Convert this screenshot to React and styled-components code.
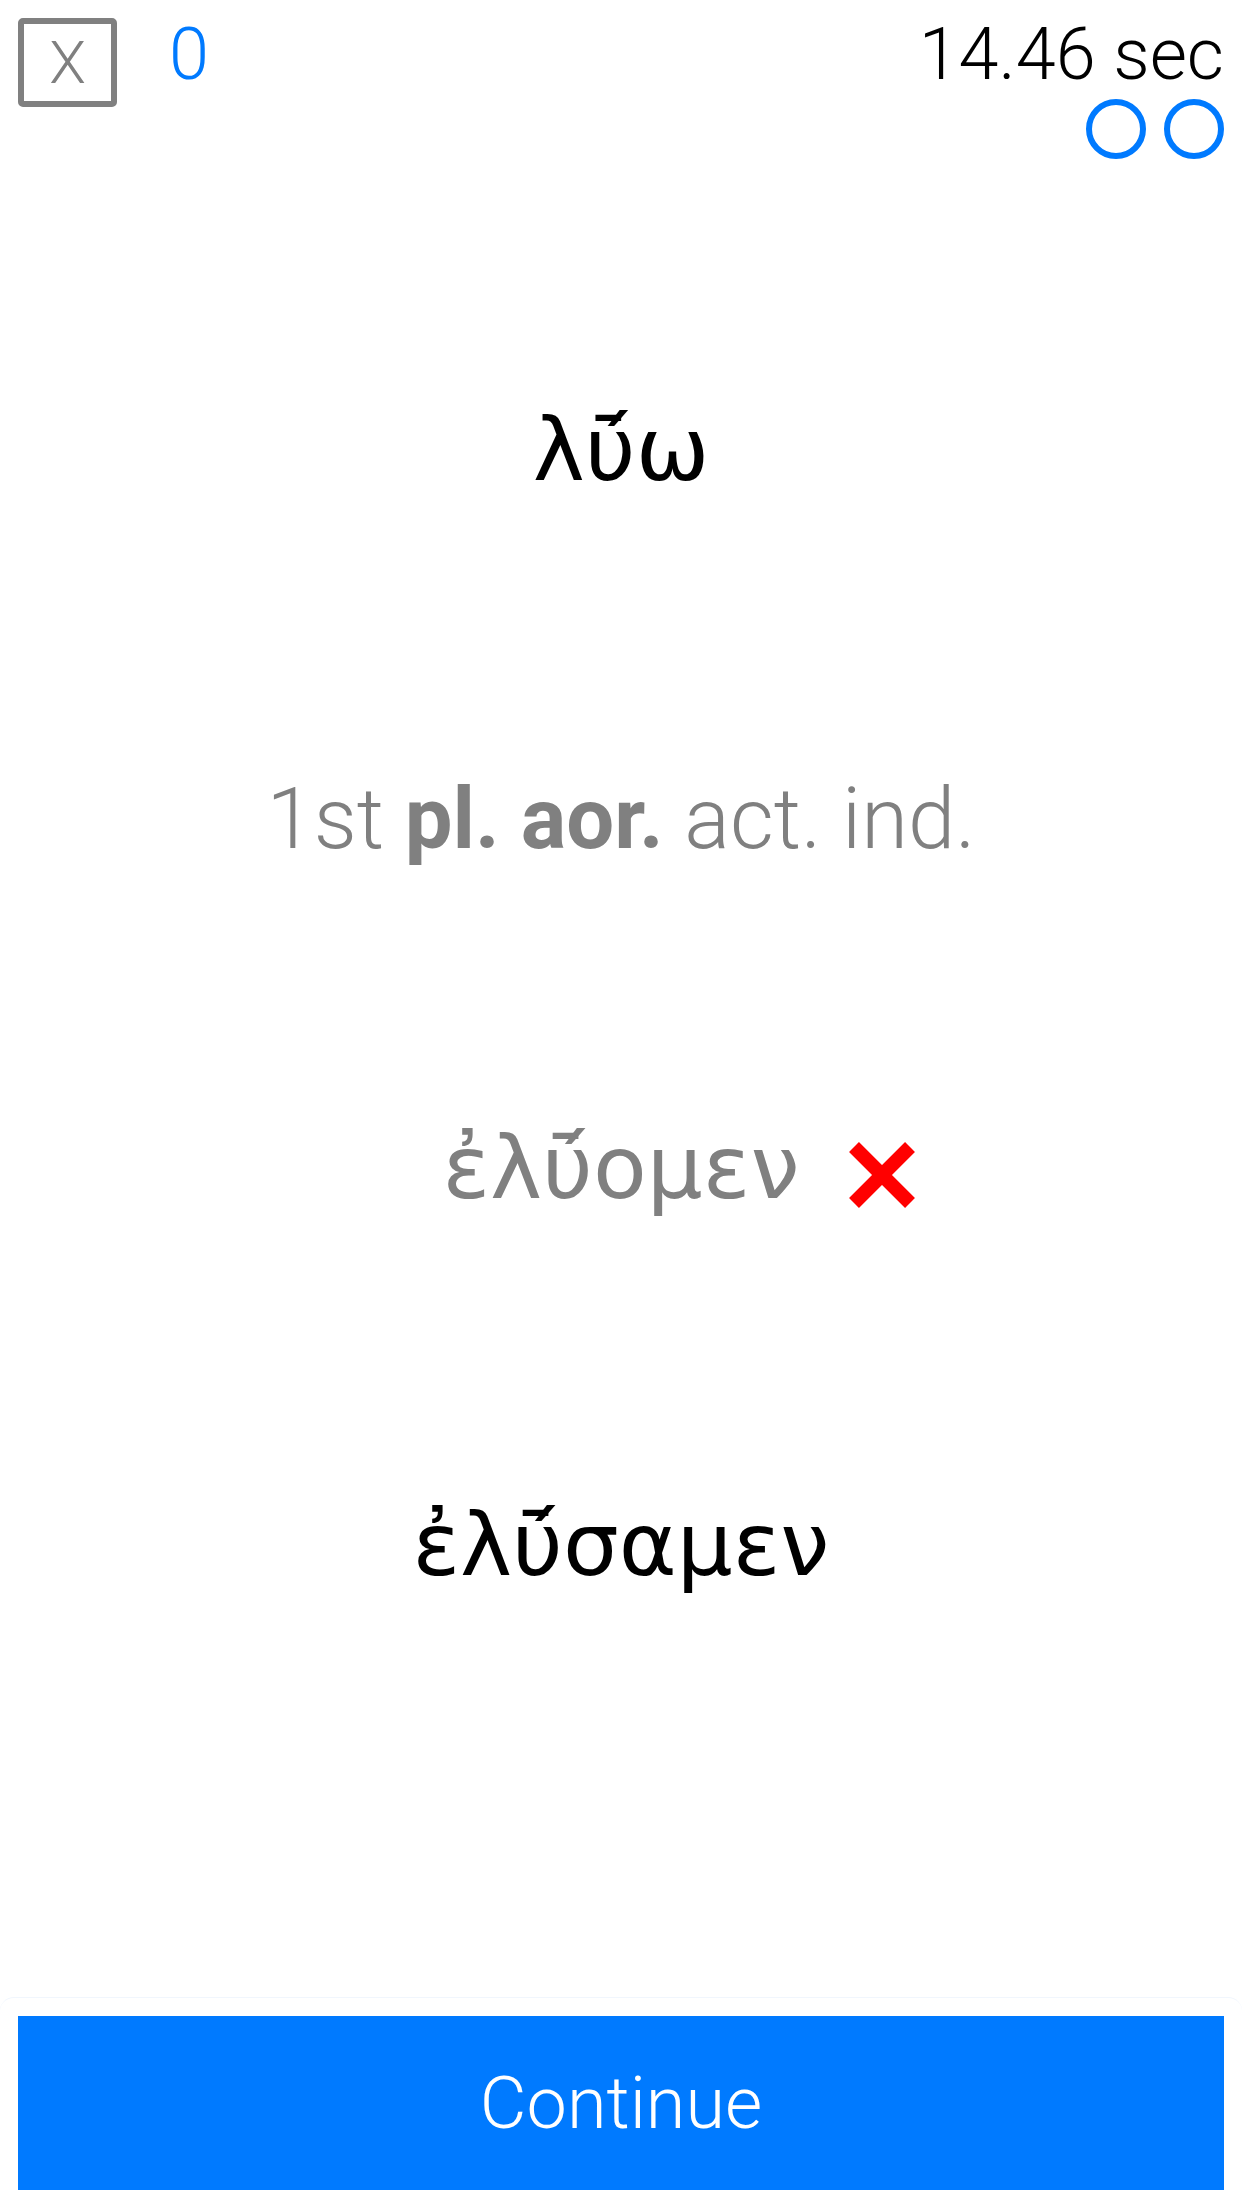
import React from 'react';
import styled, { createGlobalStyle } from 'styled-components';

const GlobalStyle = createGlobalStyle`
  html, body {
    margin: 0;
    padding: 0;
    background: #ffffff;
  }
  body {
    font-family: Roboto, "Liberation Sans", sans-serif;
  }
`;

const Page = styled.div`
  width: 1242px;
  height: 2208px;
  display: flex;
  flex-direction: column;
  background: #ffffff;
  overflow: hidden;
`;

const TopBar = styled.div`
  display: flex;
  justify-content: space-between;
  align-items: flex-start;
  padding: 18px 18px 0 18px;
`;

const Left = styled.div`
  display: flex;
  align-items: flex-start;
`;

const QuitBox = styled.div`
  width: 99px;
  height: 89px;
  box-sizing: border-box;
  border: 6px solid #808080;
  border-radius: 5px;
  display: flex;
  align-items: center;
  justify-content: center;
  color: #808080;
  font-family: Roboto, sans-serif;
  font-weight: 300;
  font-size: 60px;
  line-height: 1;
`;

const Score = styled.div`
  margin-left: 52px;
  margin-top: 1px;
  color: #007aff;
  font-weight: 300;
  font-size: 72px;
  line-height: 1;
`;

const Right = styled.div`
  display: flex;
  flex-direction: column;
  align-items: flex-end;
`;

const Timer = styled.div`
  margin-top: 1px;
  color: #000000;
  font-weight: 300;
  font-size: 72px;
  line-height: 1;
`;

const Rings = styled.div`
  display: flex;
  gap: 18px;
  margin-top: 8px;
`;

const Ring = styled.div`
  width: 60px;
  height: 60px;
  box-sizing: border-box;
  border: 6px solid #007aff;
  border-radius: 50%;
  background: ${p => (p.filled ? '#007aff' : 'transparent')};
`;

const Main = styled.div`
  display: flex;
  flex-direction: column;
  align-items: center;
`;

const Greek = styled.div`
  position: relative;
  margin-top: ${p => p.gap}px;
  color: ${p => p.color};
  font-family: "DejaVu Sans", "Noto Sans", sans-serif;
  font-size: 88px;
  line-height: 1;
  white-space: nowrap;
`;

const Parse = styled.div`
  margin-top: ${p => p.gap}px;
  color: #808080;
  font-weight: 300;
  font-size: 85px;
  line-height: 1;
  white-space: nowrap;

  b {
    font-weight: 700;
  }
`;

const WrongMark = styled.svg`
  position: absolute;
  left: calc(100% + 49px);
  top: 18px;
  width: 66px;
  height: 66px;
`;

const Footer = styled.div`
  margin-top: auto;
  padding: 18px;
  border-top: 1px solid #f1f6fd;
  border-radius: 14px 14px 0 0;
`;

const ContinueButton = styled.button`
  display: flex;
  align-items: center;
  justify-content: center;
  width: 100%;
  height: 174px;
  border: none;
  background: #007aff;
  color: #ffffff;
  font-family: Roboto, sans-serif;
  font-weight: 300;
  font-size: 72px;
  cursor: pointer;
`;

const MACRON_ACUTE = '\u0304\u0301';

export default function App() {
  return (
    <>
      <GlobalStyle />
      <Page>
        <TopBar>
          <Left>
            <QuitBox>X</QuitBox>
            <Score>0</Score>
          </Left>
          <Right>
            <Timer>14.46 sec</Timer>
            <Rings>
              <Ring />
              <Ring />
            </Rings>
          </Right>
        </TopBar>

        <Main>
          <Greek gap={247} color="#000000">
            {`λυ${MACRON_ACUTE}ω`}
          </Greek>
          <Parse gap={283}>
            1st <b>pl. aor.</b> act. ind.
          </Parse>
          <Greek gap={262} color="#808080">
            {`ἐλυ${MACRON_ACUTE}ομεν`}
            <WrongMark viewBox="0 0 66 66">
              <line x1="5" y1="5" x2="61" y2="61" stroke="#ff0000" strokeWidth="14" />
              <line x1="61" y1="5" x2="5" y2="61" stroke="#ff0000" strokeWidth="14" />
            </WrongMark>
          </Greek>
          <Greek gap={289} color="#000000">
            {`ἐλυ${MACRON_ACUTE}σαμεν`}
          </Greek>
        </Main>

        <Footer>
          <ContinueButton>Continue</ContinueButton>
        </Footer>
      </Page>
    </>
  );
}
